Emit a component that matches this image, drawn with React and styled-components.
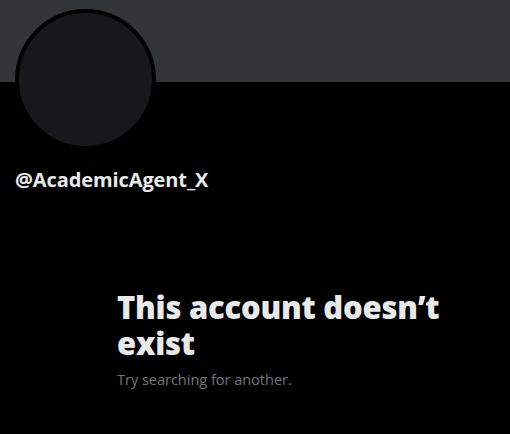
import React from 'react';
import styled, { createGlobalStyle } from 'styled-components';

const GlobalStyle = createGlobalStyle`
  html, body {
    margin: 0;
    padding: 0;
    background: #000;
  }
  body {
    font-family: "Segoe UI", "Open Sans", "Noto Sans", "Liberation Sans", sans-serif;
    color: #e7e9ea;
  }
`;

const Page = styled.div`
  width: 510px;
  height: 434px;
  background: #000;
  overflow: hidden;
`;

const Banner = styled.div`
  height: 82px;
  background: #333639;
`;

const ProfileHead = styled.div`
  padding: 0 15px;
  margin-top: -73px;
`;

const Avatar = styled.div`
  width: 133px;
  height: 133px;
  border-radius: 50%;
  background: #16181c;
  border: 4px solid #000;
`;

const Handle = styled.div`
  margin-top: 18px;
  font-size: 20px;
  line-height: 24px;
  font-weight: 700;
  letter-spacing: -0.1px;
  color: #e7e9ea;
`;

const EmptyState = styled.div`
  margin: 97px 0 0 117px;
  width: 340px;
`;

const Title = styled.h2`
  margin: 0;
  font-size: 31px;
  line-height: 36px;
  font-weight: 800;
  letter-spacing: -0.25px;
  color: #e7e9ea;
`;

const Subtitle = styled.p`
  margin: 8px 0 0;
  font-size: 14.6px;
  line-height: 20px;
  letter-spacing: -0.05px;
  color: #71767b;
`;

export default function App() {
  return (
    <Page>
      <GlobalStyle />
      <Banner />
      <ProfileHead>
        <Avatar />
        <Handle>@AcademicAgent_X</Handle>
      </ProfileHead>
      <EmptyState>
        <Title>This account doesn’t exist</Title>
        <Subtitle>Try searching for another.</Subtitle>
      </EmptyState>
    </Page>
  );
}
